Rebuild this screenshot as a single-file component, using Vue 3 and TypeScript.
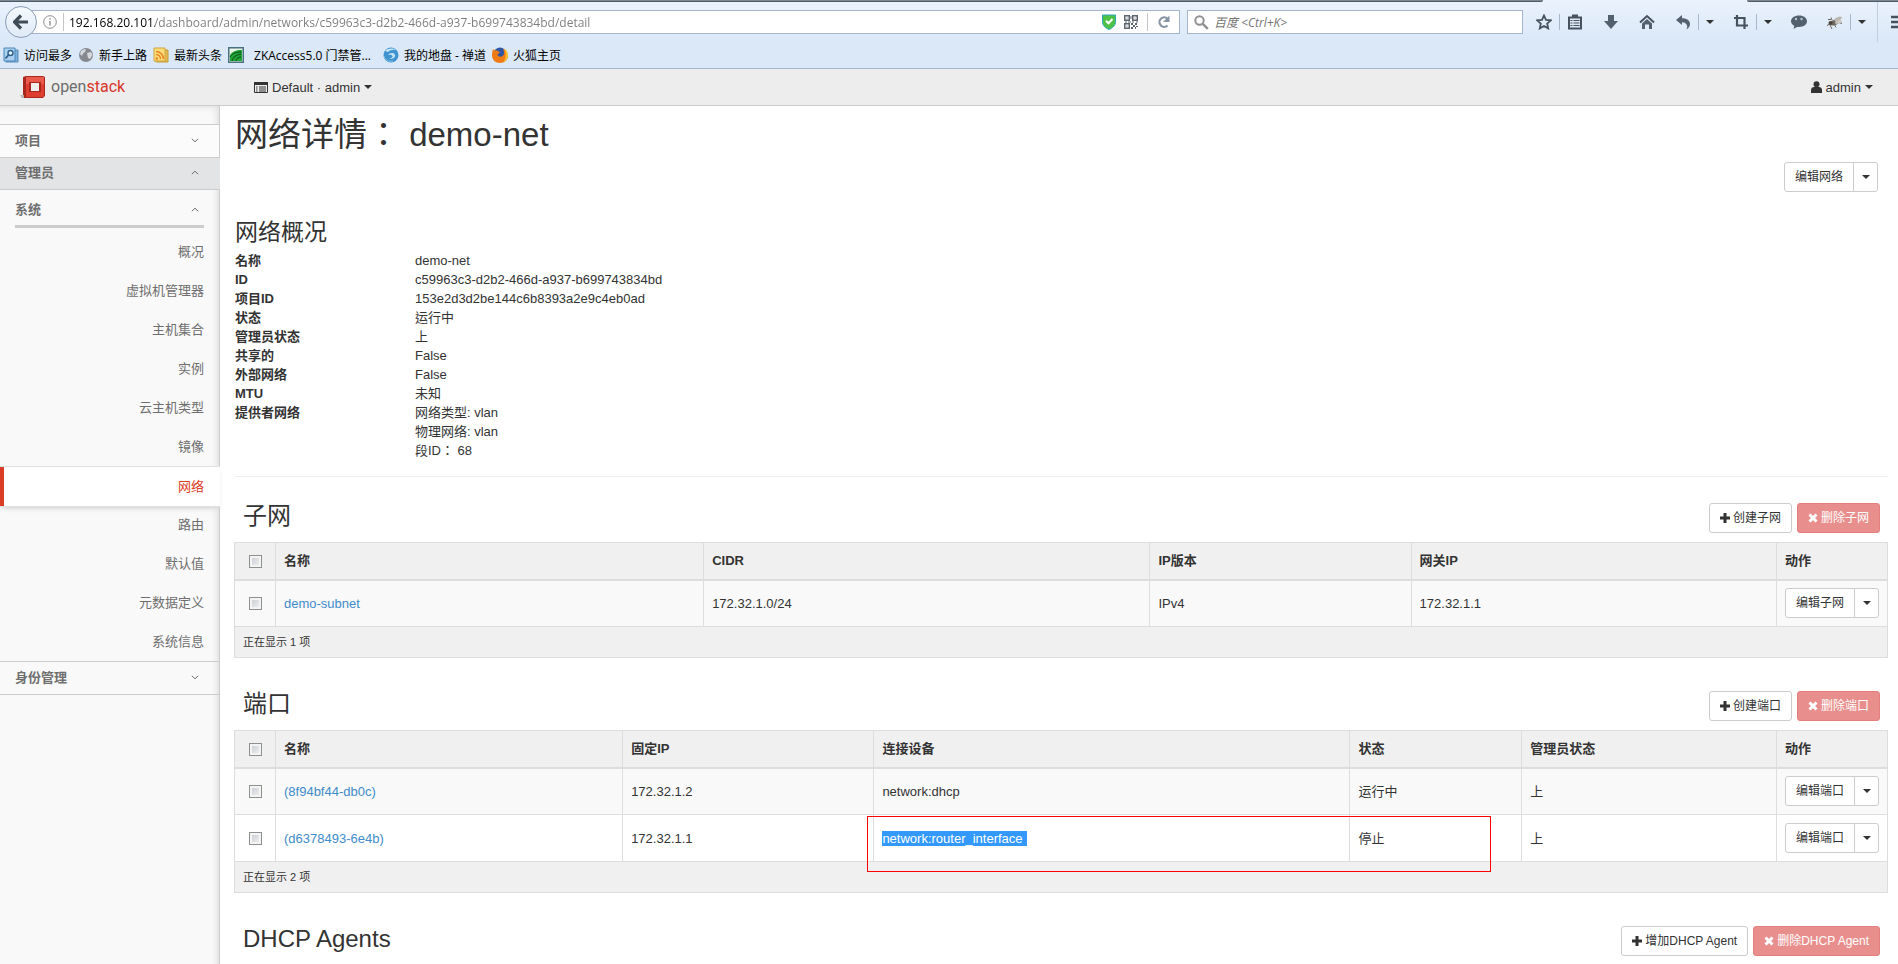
<script setup lang="ts">
import { ref } from 'vue'

interface Column { label: string; cls: string }
interface Row { cells: string[]; selectedCell?: number }
interface Section {
  id: string
  title: string
  create: string
  remove: string
  edit?: string
  columns?: Column[]
  rows?: Row[]
  footer?: string
  marked?: boolean
}

const url = ref('192.168.20.101/dashboard/admin/networks/c59963c3-d2b2-466d-a937-b699743834bd/detail')
const search = ref('')

const systemItems = ['概况', '虚拟机管理器', '主机集合', '实例', '云主机类型', '镜像', '网络', '路由', '默认值', '元数据定义', '系统信息']
const activeItem = '网络'

const details: { term: string; values: string[] }[] = [
  { term: '名称', values: ['demo-net'] },
  { term: 'ID', values: ['c59963c3-d2b2-466d-a937-b699743834bd'] },
  { term: '项目ID', values: ['153e2d3d2be144c6b8393a2e9c4eb0ad'] },
  { term: '状态', values: ['运行中'] },
  { term: '管理员状态', values: ['上'] },
  { term: '共享的', values: ['False'] },
  { term: '外部网络', values: ['False'] },
  { term: 'MTU', values: ['未知'] },
  { term: '提供者网络', values: ['网络类型: vlan', '物理网络: vlan', '段ID： 68'] },
]

const sections: Section[] = [
  {
    id: 'subnets', title: '子网', create: '创建子网', remove: '删除子网', edit: '编辑子网',
    columns: [
      { label: '名称', cls: 'c-sub-name' },
      { label: 'CIDR', cls: 'c-sub-cidr' },
      { label: 'IP版本', cls: 'c-sub-ver' },
      { label: '网关IP', cls: 'c-rest' },
    ],
    rows: [{ cells: ['demo-subnet', '172.32.1.0/24', 'IPv4', '172.32.1.1'] }],
    footer: '正在显示 1 项',
  },
  {
    id: 'ports', title: '端口', create: '创建端口', remove: '删除端口', edit: '编辑端口',
    columns: [
      { label: '名称', cls: 'c-port-name' },
      { label: '固定IP', cls: 'c-port-ip' },
      { label: '连接设备', cls: 'c-port-dev' },
      { label: '状态', cls: 'c-port-state' },
      { label: '管理员状态', cls: 'c-rest' },
    ],
    rows: [
      { cells: ['(8f94bf44-db0c)', '172.32.1.2', 'network:dhcp', '运行中', '上'] },
      { cells: ['(d6378493-6e4b)', '172.32.1.1', 'network:router_interface', '停止', '上'], selectedCell: 2 },
    ],
    footer: '正在显示 2 项',
    marked: true,
  },
  { id: 'agents', title: 'DHCP Agents', create: '增加DHCP Agent', remove: '删除DHCP Agent' },
]
</script>

<template>
  <div class="window">
    <header class="browser">
      <div class="tab-edge"><span class="edge left"></span><span class="edge right"></span></div>
      <div class="toolbar">
        <button class="back" type="button" aria-label="后退">
          <svg width="16" height="16" viewBox="0 0 16 16"><path d="M8 1.5 1.5 8 8 14.5M2.5 8H15" fill="none" stroke="#3f4b57" stroke-width="3.2" /></svg>
        </button>
        <div class="urlbar">
          <svg class="info" width="14" height="14" viewBox="0 0 14 14"><circle cx="7" cy="7" r="6.3" fill="none" stroke="#8c8c8c" /><path d="M7 6v4.5M7 3.2v1.5" stroke="#8c8c8c" stroke-width="1.4" /></svg>
          <span class="bar-sep"></span>
          <input v-model="url" class="url-input" type="text" aria-label="网址" spellcheck="false">
          <svg class="shield" width="14" height="16" viewBox="0 0 14 16"><path d="M.5 1h13v6.500c0 4-3 6.500-6.500 8-3.500-1.500-6.500-4-6.500-8z" fill="#4dc247" stroke="#2aa5b8" /><path d="M4 6.800 6.500 9.300 10.500 5" fill="none" stroke="#fff" stroke-width="2" /></svg>
          <svg class="qr" width="14" height="14" viewBox="0 0 14 14"><path d="M.75.75h4.500v4.500H.75zM8.750.75h4.500v4.500h-4.500zM.75 8.750h4.500v4.500H.75z" fill="none" stroke="#5d6670" stroke-width="1.500" /><path d="M2.500 2.500h1v1h-1zM10.500 2.500h1v1h-1zM2.500 10.500h1v1h-1zM6.500 1h1v3h-1zM1 6.500h2v1H1zM4 6.500h3v1H4zM8 6.500h2v1H8zM12 6.500h2v1h-2zM7 8h2v2H7zM11 8h2v2h-2zM9 10h2v2H9zM12 11h2v1h-2zM7 12h2v2H7zM11 12h1v2h-1z" fill="#5d6670" /></svg>
          <span class="bar-sep"></span>
          <button class="plain reload" type="button" aria-label="重新载入">
            <svg width="14" height="14" viewBox="0 0 14 14"><path d="M10.500 10.500A4.700 4.700 0 1 1 10.500 3.800" fill="none" stroke="#8593a3" stroke-width="2.200" /><path d="M12.500.5v6.500H6z" fill="#8593a3" /></svg>
          </button>
        </div>
        <div class="searchbar">
          <svg width="15" height="15" viewBox="0 0 15 15"><circle cx="5.500" cy="5.500" r="4.200" fill="none" stroke="#909090" stroke-width="2" /><path d="m8.800 8.800 5 5" stroke="#909090" stroke-width="2.400" /></svg>
          <input v-model="search" type="text" placeholder="百度 <Ctrl+K>" aria-label="搜索">
        </div>
        <div class="tools">
          <div class="group">
            <button class="tool" type="button" aria-label="收藏"><svg width="16" height="16" viewBox="0 0 16 16"><path d="m8 1.500 2 4.400 4.800.5-3.600 3.200 1 4.800L8 12l-4.200 2.400 1-4.800L1.200 6.400 6 5.900z" fill="none" stroke="#46525e" stroke-width="1.800" /></svg></button>
            <span class="tool-sep"></span>
            <button class="tool" type="button" aria-label="书签列表"><svg width="16" height="16" viewBox="0 0 16 16"><path d="M2 3.500h12v11H2z" fill="#dfe9f4" stroke="#46525e" stroke-width="2" /><path d="M5 .5h6v3H5z" fill="#46525e" /><path d="M3.500 6.500h2M6.500 6.500h6M3.500 9h2M6.500 9h6M3.500 11.500h2M6.500 11.500h6" stroke="#46525e" stroke-width="1.200" /></svg></button>
          </div>
          <button class="tool" type="button" aria-label="下载"><svg width="16" height="16" viewBox="0 0 16 16"><path d="M5 1h6v6h4l-7 8-7-8h4z" fill="#53606d" /></svg></button>
          <button class="tool" type="button" aria-label="主页"><svg width="16" height="16" viewBox="0 0 16 16"><path d="M1 8.500 8 2l7 6.500" fill="none" stroke="#46525e" stroke-width="2" /><path d="m8 5 5 4.500V15h-3v-4.500H6V15H3V9.500z" fill="#53606d" /></svg></button>
          <div class="group">
            <button class="tool" type="button" aria-label="撤销"><svg width="16" height="16" viewBox="0 0 16 16"><path d="M1 6 7 1v3.200c5 0 8 2.300 8 5.800 0 2.500-1.300 4.500-4 5.500 1.200-1.500 1.500-2.500 1-4C11.500 9.500 10 8.500 7 8.300V11z" fill="#53606d" /></svg></button>
            <span class="tool-sep"></span>
            <button class="drop" type="button" aria-label="撤销菜单"><i class="caret"></i></button>
          </div>
          <div class="group">
            <button class="tool" type="button" aria-label="截图"><svg width="16" height="16" viewBox="0 0 16 16"><path d="M4 1v10.500h11M1 4h10.500v11" fill="none" stroke="#46525e" stroke-width="2.200" /></svg></button>
            <span class="tool-sep"></span>
            <button class="drop" type="button" aria-label="截图菜单"><i class="caret"></i></button>
          </div>
          <button class="tool" type="button" aria-label="聊天"><svg width="16" height="16" viewBox="0 0 16 16"><path d="M8 1.500c4.500 0 8 2.400 8 5.800s-3.500 5.700-8 5.700l-2-.1L2.500 15l.8-3.200C1.200 10.800 0 9.200 0 7.300 0 3.900 3.500 1.500 8 1.500z" fill="#53606d" /><circle cx="5" cy="5" r="1.200" fill="#b9c7d5" /><circle cx="10.500" cy="5" r="1.200" fill="#b9c7d5" /></svg></button>
          <div class="group">
            <button class="tool" type="button" aria-label="调试"><svg width="16" height="16" viewBox="0 0 16 16"><path d="M1 5.500h3M3 11l2 4M7.500 10.500l1.500 3M12 8.500l3 1M0 11.500l3-1.500M5 6 4 3.500" stroke="#6b665e" stroke-width="1" /><ellipse cx="7.500" cy="8.500" rx="4.500" ry="2.700" transform="rotate(-20 7.500 8.500)" fill="#6d6961" /><ellipse cx="11" cy="5" rx="4" ry="1.800" transform="rotate(-25 11 5)" fill="#b9b6af" /><ellipse cx="11.500" cy="8" rx="3.500" ry="1.500" transform="rotate(-15 11.500 8)" fill="#c9c6c0" /><circle cx="3.500" cy="9" r="2" fill="#4b443c" /></svg></button>
            <span class="tool-sep"></span>
            <button class="drop" type="button" aria-label="调试菜单"><i class="caret"></i></button>
          </div>
        </div>
        <button class="menu" type="button" aria-label="菜单"><svg width="18" height="14" viewBox="0 0 18 14"><path d="M0 2h18M0 7h18M0 12h18" stroke="#46525e" stroke-width="2.600" /></svg></button>
      </div>
      <nav class="bookmarks" aria-label="书签">
        <a href="#"><svg width="16" height="16" viewBox="0 0 16 16"><path d="M3 3h12v12H3z" fill="#7db1dc" stroke="#5589b5" /><path d="M1 1h11v13H1z" fill="#a9d0f0" stroke="#4a86b8" /><circle cx="7.500" cy="6" r="2.500" fill="#e5f3ff" stroke="#315f8c" stroke-width="1.400" /><path d="m5.500 8-3 3.500" stroke="#315f8c" stroke-width="1.800" /></svg>访问最多</a>
        <a href="#"><svg width="16" height="16" viewBox="0 0 16 16"><circle cx="8" cy="8" r="7" fill="#85898f" /><path d="M3 4c2-2 4-2 5-1.500L7 5 5 6.500 4 9 2 7zM9 6l4-1 1.500 3L12 12l-2-1-.5-2.500z" fill="#d5d8dc" /></svg>新手上路</a>
        <a href="#"><svg width="16" height="16" viewBox="0 0 16 16"><path d="M3 3h12v12H3z" fill="#e3bb55" stroke="#c79a36" /><path d="M1 1h11v13H1z" fill="#fbdc7b" stroke="#d0a53d" /><circle cx="3.800" cy="11.500" r="1.200" fill="#e5831c" /><path d="M3 7.500a4.500 4.500 0 0 1 4.500 4.500M3 4.500a7.500 7.500 0 0 1 7.500 7.500" fill="none" stroke="#e5831c" stroke-width="1.500" /></svg>最新头条</a>
        <a href="#" class="wide"><svg width="16" height="16" viewBox="0 0 16 16"><path d="M.75.75h14.500v14.500H.75z" fill="#e9f7e6" stroke="#4a7180" stroke-width="1.500" /><path d="M2 14V8c4-5 8-5 12-5v11z" fill="#1fa437" /><path d="M2 10c3-4 6-5 11-5M4 14c1-4 4-6 9-7M8 14c0-2 2-4 5-4" fill="none" stroke="#0b4a19" /></svg>ZKAccess5.0 门禁管...</a>
        <a href="#"><svg width="16" height="16" viewBox="0 0 16 16"><circle cx="8" cy="8" r="7.500" fill="#3f93cf" /><path d="M2 4c3-3 8-3 11-1-3-.500-6 0-8 2zM5 8c1-2 6-3 7 0 .5 3-4 5-6 3 2 .5 4-.500 3.500-2S6 7.500 5 8z" fill="#c4e5f7" /><path d="M1 9c1 4 5 6 9 5" fill="none" stroke="#86c3e8" /></svg>我的地盘 - 禅道</a>
        <a href="#"><svg width="16" height="16" viewBox="0 0 16 16"><circle cx="8" cy="7" r="6.500" fill="#3156a3" /><path d="M1 2c1 1.500 2 1.500 3.500 1.500S7 4.500 8 5.500L5.500 7.500C6 10 9.500 10.500 11.500 8c1-2 .5-4-.5-6 3 1 5 4 5 7 0 4-3.500 7-8 7s-8-3-8-8c0-2 .3-4 1-6z" fill="#ef7b17" /><path d="M12 1.500c3 2 4 4.500 4 7 0 3-2 5.500-4.500 6.500 2.500-4 3-9 .5-13.500z" fill="#fbc02d" /></svg>火狐主页</a>
      </nav>
    </header>

    <header class="navbar">
      <a class="brand" href="#">
        <svg width="25" height="24" viewBox="0 0 25 24"><path d="m3 2 3-1h17l2 1v19l-2 2H4l-3-2 2-1z" fill="#a82820" /><path d="M6 2h18v20H6z" fill="#dd3e30" /><path d="M6 2h18v7H6z" fill="#ea5a4c" /><path d="M9 7h12v10H9z" fill="#a82820" /><path d="M11 8h8v8h-8z" fill="#f1efee" /><path d="M0 20h4v3H2z" fill="#b9b2b1" /></svg>
        <span class="word">open<b>stack</b></span>
      </a>
      <button class="plain project" type="button">
        <svg width="14" height="11" viewBox="0 0 14 11"><path d="M.5.5h13v10H.5z" fill="none" stroke="#333" /><path d="M0 0h14v3H0z" fill="#333" /><path d="M2 5h1.500M5 5h7M2 7h1.500M5 7h7M2 9h1.500M5 9h7" stroke="#333" /></svg>
        Default · admin <i class="caret"></i>
      </button>
      <button class="plain user" type="button">
        <svg width="11" height="12" viewBox="0 0 11 12"><circle cx="5.500" cy="3.200" r="3" fill="#333" /><path d="M0 12V9c0-2 1.500-3 3-3h5c1.500 0 3 1 3 3v3z" fill="#333" /></svg>
        admin <i class="caret"></i>
      </button>
    </header>

    <div class="body">
      <aside class="sidebar">
        <button class="panel first" type="button">项目<svg width="8" height="5" viewBox="0 0 8 5"><path d="m.8.8 3.200 3L7.200.8" fill="none" stroke="#6e6e6e" /></svg></button>
        <button class="panel open" type="button">管理员<svg width="8" height="5" viewBox="0 0 8 5"><path d="M.8 4.200 4 1.200l3.200 3" fill="none" stroke="#6e6e6e" /></svg></button>
        <div class="system">
          <button class="system-head" type="button">系统<svg width="8" height="5" viewBox="0 0 8 5"><path d="M.8 4.200 4 1.200l3.200 3" fill="none" stroke="#6e6e6e" /></svg></button>
          <ul>
            <li v-for="item in systemItems" :key="item"><a href="#" :class="{ active: item === activeItem }">{{ item }}</a></li>
          </ul>
        </div>
        <button class="panel last" type="button">身份管理<svg width="8" height="5" viewBox="0 0 8 5"><path d="m.8.8 3.200 3L7.200.8" fill="none" stroke="#6e6e6e" /></svg></button>
      </aside>

      <main class="main">
        <h1>网络详情： demo-net</h1>
        <div class="page-actions">
          <div class="btn-group">
            <button class="btn" type="button">编辑网络</button><button class="btn toggle" type="button" aria-label="更多操作"><i class="caret"></i></button>
          </div>
        </div>
        <h2 class="overview">网络概况</h2>
        <dl>
          <template v-for="d in details" :key="d.term">
            <dt>{{ d.term }}</dt>
            <dd><div v-for="v in d.values" :key="v">{{ v }}</div></dd>
          </template>
        </dl>
        <hr>

        <section v-for="s in sections" :key="s.id" class="block">
          <div class="block-head">
            <h2>{{ s.title }}</h2>
            <div class="block-actions">
              <button class="btn" type="button"><svg width="10" height="10" viewBox="0 0 10 10"><path d="M5 0v10M0 5h10" stroke="#333" stroke-width="3" /></svg>{{ s.create }}</button>
              <button class="btn danger" type="button"><svg width="10" height="10" viewBox="0 0 10 10"><path d="m1.500 1.500 7 7M8.500 1.500l-7 7" stroke="#fff" stroke-width="3" /></svg>{{ s.remove }}</button>
            </div>
          </div>
          <div v-if="s.columns" class="table-wrap">
            <table>
              <colgroup>
                <col class="c-check">
                <col v-for="c in s.columns" :key="c.label" :class="c.cls">
                <col class="c-action">
              </colgroup>
              <thead>
                <tr>
                  <th class="check"><input type="checkbox" :aria-label="s.title + ' 全选'"></th>
                  <th v-for="c in s.columns" :key="c.label">{{ c.label }}</th>
                  <th>动作</th>
                </tr>
              </thead>
              <tbody>
                <tr v-for="r in s.rows" :key="r.cells[0]">
                  <td class="check"><input type="checkbox" :aria-label="r.cells[0]"></td>
                  <td v-for="(cell, i) in r.cells" :key="i">
                    <a v-if="i === 0" href="#">{{ cell }}</a>
                    <span v-else-if="r.selectedCell === i" class="selected">{{ cell }}</span>
                    <template v-else>{{ cell }}</template>
                  </td>
                  <td>
                    <div class="btn-group">
                      <button class="btn" type="button">{{ s.edit }}</button><button class="btn toggle" type="button" aria-label="更多操作"><i class="caret"></i></button>
                    </div>
                  </td>
                </tr>
              </tbody>
              <tfoot>
                <tr><td :colspan="s.columns.length + 2">{{ s.footer }}</td></tr>
              </tfoot>
            </table>
            <div v-if="s.marked" class="marker"></div>
          </div>
        </section>
      </main>
    </div>
  </div>
</template>

<style>
body { margin: 0; background: #fff; }
</style>

<style scoped>
* { box-sizing: border-box; }
.window {
  min-height: 100vh;
  display: flex;
  flex-direction: column;
  overflow: hidden;
  color: #333;
  font: 13px/19px "Liberation Sans", Arial, "Noto Sans CJK SC", sans-serif;
}
button, input { font: inherit; color: inherit; margin: 0; }
button { padding: 0; border: 0; background: none; cursor: pointer; }
a { text-decoration: none; }
svg { flex: none; display: block; }
.caret { display: inline-block; flex: none; border: 4px solid transparent; border-top-color: currentColor; border-bottom: 0; }

.browser {
  background: linear-gradient(#eaf2fc, #dae8f8 42px);
  border-bottom: 1px solid #a3b9d3;
  font-family: "Open Sans", "Noto Sans CJK SC", sans-serif;
  font-size: 12px;
  color: #000;
}
.tab-edge { display: flex; justify-content: space-between; height: 2px; }
.edge { background: #7b8894; border-bottom: 1px solid #4f5b68; }
.edge.left { flex: 1; margin-right: 204px; border-bottom-right-radius: 4px; }
.edge.right { width: 151px; border-bottom-left-radius: 4px; }
.toolbar { display: flex; align-items: center; height: 40px; padding-left: 5px; }
.back {
  z-index: 1;
  flex: none;
  display: grid;
  place-items: center;
  width: 32px;
  height: 32px;
  border: 1px solid #8a9cb5;
  border-radius: 50%;
  background: linear-gradient(#f5f9fe, #dfeaf7);
}
.urlbar, .searchbar { display: flex; align-items: center; height: 24px; background: #fff; border: 1px solid #a5b5cb; }
.urlbar { flex: 1; margin-left: -7px; padding: 0 8px 0 12px; }
.url-input {
  flex: 1;
  min-width: 0;
  height: 22px;
  margin-left: 5px;
  padding: 0;
  border: 0;
  outline: 0;
  color: transparent;
  caret-color: #000;
  background: linear-gradient(to right, #000 86px, #7b7b7b 86px);
  -webkit-background-clip: text;
  background-clip: text;
}
.bar-sep { width: 1px; height: 18px; background: #c6c6c6; }
.info { margin-right: 6px; }
.shield { margin-right: 8px; }
.qr { margin-right: 9px; }
.reload { margin-left: 9px; }
.searchbar { flex: 0 1 336px; margin-left: 7px; padding: 0 6px; gap: 5px; }
.searchbar input { flex: 1; min-width: 0; padding: 0; border: 0; outline: 0; background: none; }
.searchbar input::placeholder { color: #757575; font-style: italic; opacity: 1; }
.tools { display: flex; align-items: center; gap: 6px; margin-left: 6px; }
.group { display: flex; align-items: center; }
.tool { display: grid; place-items: center; width: 30px; height: 24px; }
.drop { display: grid; place-items: center; width: 21px; height: 24px; color: #333; }
.tool-sep { width: 1px; height: 16px; background: #a9b8c9; }
.menu { flex: none; width: 21px; height: 40px; margin-left: 5px; padding-left: 13px; border-left: 1px solid #c2cedc; overflow: hidden; }
.bookmarks { display: flex; align-items: center; gap: 6px; height: 26px; padding-left: 3px; }
.bookmarks a { display: flex; align-items: center; gap: 5px; color: #000; white-space: nowrap; }
.bookmarks .wide { gap: 10px; margin-right: 6px; }

.navbar { display: flex; align-items: center; height: 37px; background: #ededed; border-bottom: 1px solid #ccc; }
.brand { display: flex; align-items: center; gap: 6px; width: 234px; padding-left: 20px; }
.word { font: 16px/24px Roboto, sans-serif; color: #6c6c6c; }
.word b { font-weight: 400; color: #d8352a; }
.plain { display: flex; align-items: center; gap: 4px; }
.project { margin-left: 20px; }
.user { margin-left: auto; margin-right: 25px; }

.body { flex: 1; display: flex; }
.sidebar {
  flex: none;
  width: 220px;
  padding-top: 18px;
  background: #f9f9f9;
  border-right: 1px solid #ccc;
  box-shadow: inset -5px 4px 6px -3px #ddd;
  color: #6e6e6e;
}
.panel, .system-head { display: flex; align-items: center; justify-content: space-between; font-weight: 700; }
.panel { width: 100%; padding: 0 20px 2px 15px; border-bottom: 1px solid #ccc; height: 33px; }
.panel.first { height: 34px; border-top: 1px solid #ccc; background: #fbfbfb; }
.panel.open { width: 220px; height: 32px; padding-right: 21px; background: #e2e4e6; }
.panel.last { height: 34px; border-top: 1px solid #ccc; }
.system-head { width: 189px; height: 38px; margin: 0 0 4px 15px; padding: 3px 5px 0 0; border-bottom: 3px solid #ccc; }
.system ul { margin: 0; padding: 0; list-style: none; }
.system a { display: block; height: 39px; padding: 0 15px 0 12px; line-height: 39px; text-align: right; color: #6e6e6e; }
.system a.active {
  width: 220px;
  height: 41px;
  margin-bottom: -2px;
  padding-right: 16px;
  background: #fff;
  border: 1px solid #e0e0e0;
  border-width: 1px 0;
  box-shadow: inset 4px 0 #dc3c26, 0 3px 5px -2px #ccc;
  color: #dc3c26;
}

.main { flex: 1; min-width: 0; padding: 9px 10px 6px 15px; }
h1, dl { font-family: "Liberation Sans", Arial, "Noto Sans CJK TC", "Noto Sans CJK SC", sans-serif; }
h1 { margin: 0 0 7px; font-size: 33px; line-height: 40px; font-weight: 400; }
h2 { margin: 0; font-size: 24px; line-height: 26px; font-weight: 400; }
h2.overview { font-size: 23px; }
.page-actions { display: flex; justify-content: flex-end; margin-bottom: 27px; padding-right: 10px; }
.btn-group { display: flex; }
.btn {
  display: flex;
  align-items: center;
  gap: 3px;
  height: 30px;
  padding: 0 10px;
  border: 1px solid #ccc;
  border-radius: 3px;
  background: #fff;
  font-size: 12px;
  white-space: nowrap;
}
.btn-group .btn:first-child { border-radius: 3px 0 0 3px; }
.btn-group .toggle { justify-content: center; width: 25px; padding: 0; margin-left: -1px; border-radius: 0 3px 3px 0; }
.btn.danger { background: #e88f8d; border-color: #e37f7c; color: #fff; }
dl { display: grid; grid-template-columns: 180px 1fr; margin: 6px 0 16px; }
dt { font-weight: 700; }
dd { margin: 0; }
hr { height: 1px; margin: 0 0 26px; border: 0; background: #eee; }
.block + .block { margin-top: 33px; }
.block-head { display: flex; justify-content: space-between; padding: 0 8px; margin-bottom: 9px; }
.block-actions { display: flex; gap: 5px; }
.table-wrap { position: relative; margin-left: -1px; }
table { width: 100%; border-collapse: collapse; table-layout: fixed; }
.c-check { width: 41px; }
.c-action { width: 111px; }
.c-sub-name { width: 25.9%; }
.c-sub-cidr { width: 27%; }
.c-sub-ver { width: 15.8%; }
.c-port-name { width: 21%; }
.c-port-ip { width: 15.2%; }
.c-port-dev { width: 28.8%; }
.c-port-state { width: 10.4%; }
th, td { padding: 0 8px; border: 1px solid #ddd; text-align: left; vertical-align: middle; }
th { height: 37px; background: #f0f0f0; border-bottom-width: 2px; }
tbody td { height: 47px; }
tbody tr:nth-child(odd) { background: #f9f9f9; }
tbody a { color: #428bca; }
tfoot td { height: 31px; background: #f0f0f0; font-size: 11px; }
.check { padding: 0; text-align: center; }
.check input {
  appearance: none;
  display: block;
  width: 13px;
  height: 13px;
  margin: 1px auto 0;
  border: 1px solid #8e8f8f;
  background: linear-gradient(135deg, #c4c9d0, #f4f4f4);
  box-shadow: inset 0 0 0 2px #f4f4f4;
}
.selected { padding-right: 4px; background: #39f; color: #fff; }
.marker { position: absolute; left: 38.3%; top: 86px; width: 37.7%; height: 56px; border: 1px solid #f00; pointer-events: none; }
</style>
